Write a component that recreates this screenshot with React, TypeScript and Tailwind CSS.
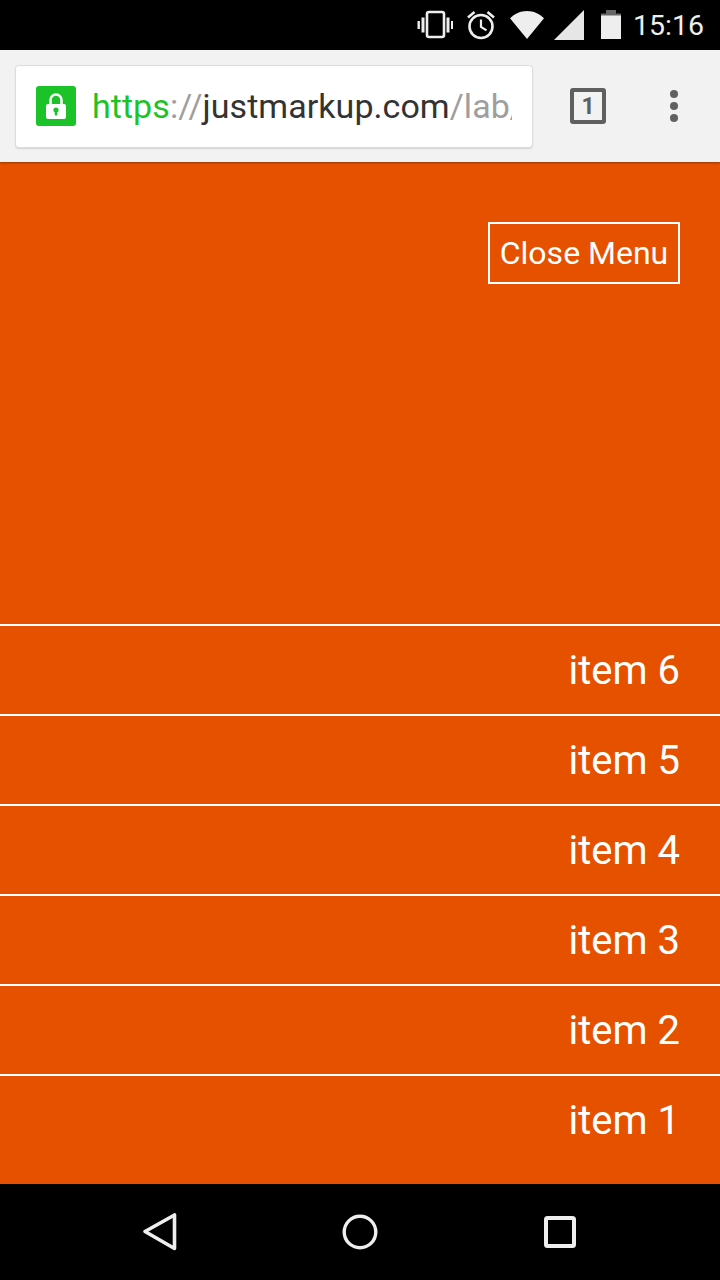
const items = [6, 5, 4, 3, 2, 1];

function StatusIcons() {
  return (
    <div className="flex items-center">
      <svg width="36" height="30" viewBox="0 0 36 30" className="ml-[417px]">
        <rect x="10" y="2" width="17" height="25" rx="2" fill="none" stroke="#eeeeee" strokeWidth="2.6" />
        <rect x="0.5" y="11" width="2.4" height="8" fill="#eeeeee" />
        <rect x="4.5" y="7.5" width="3" height="15" fill="#eeeeee" />
        <rect x="29.5" y="7.5" width="3" height="15" fill="#eeeeee" />
        <rect x="34" y="11" width="2.4" height="8" fill="#eeeeee" />
      </svg>
      <svg width="30" height="30" viewBox="0 0 30 30" className="ml-[13px]">
        <circle cx="15" cy="16.5" r="11.5" fill="none" stroke="#eeeeee" strokeWidth="2.6" />
        <path d="M15 9.5V17l5.5 3.4" fill="none" stroke="#eeeeee" strokeWidth="2.2" />
        <path d="M2 7.5 8.5 2M28 7.5 21.5 2" fill="none" stroke="#eeeeee" strokeWidth="2.6" />
      </svg>
      <svg width="34" height="30" viewBox="0 0 34 30" className="ml-[14px]">
        <path d="M0 8.2C4.500 3.800 10.500 1 17 1s12.500 2.800 17 7.200L17 29Z" fill="#eeeeee" />
      </svg>
      <svg width="30" height="30" viewBox="0 0 30 30" className="ml-[10px]">
        <path d="M30 0V30H0Z" fill="#e6e6e6" />
      </svg>
      <svg width="20" height="30" viewBox="0 0 20 30" className="ml-[17px]">
        <rect x="5" y="0" width="10" height="4" fill="#666666" />
        <path d="M0 3.500H20V29H0Z" fill="#666666" />
        <path d="M0 5.500H20V29H0Z" fill="#eeeeee" />
      </svg>
      <span className="ml-[12px] pt-[1px] text-[28.5px] leading-[50px] text-[#eeeeee] [font-family:Roboto,sans-serif]">15:16</span>
    </div>
  );
}

export default function App() {
  return (
    <div className="flex h-[1280px] w-[720px] flex-col overflow-hidden bg-[#e65100] [font-family:Roboto,sans-serif]">
      <header className="flex h-[50px] shrink-0 items-center bg-black">
        <StatusIcons />
      </header>

      <div className="flex h-[112px] shrink-0 items-center bg-[#f2f2f2] shadow-[0_1px_2px_rgba(0,0,0,0.35)]">
        <div className="ml-[16px] flex h-[81px] w-[516px] items-center rounded-[3px] bg-white pl-[20px] shadow-[0_1px_2px_rgba(0,0,0,0.4)] ring-1 ring-[#dddddd]">
          <div className="flex h-[40px] w-[40px] shrink-0 items-center justify-center rounded-[3px] bg-[#1cc328]">
            <svg width="24" height="28" viewBox="0 0 24 28">
              <path d="M6.500 13V8a5.500 5.500 0 0 1 11 0v5" fill="none" stroke="white" strokeWidth="2.600" />
              <rect x="2" y="12" width="20" height="15" rx="2" fill="white" />
              <circle cx="12" cy="18" r="2.600" fill="#1cc328" />
              <rect x="10.800" y="18" width="2.400" height="5.500" fill="#1cc328" />
            </svg>
          </div>
          <div className="ml-[16px] w-[420px] overflow-hidden whitespace-nowrap text-[34px] leading-[40px] tracking-[0.05px]">
            <span className="text-[#1cc328]">https</span>
            <span className="text-[#9e9e9e]">://</span>
            <span className="text-[#333333]">justmarkup.com</span>
            <span className="text-[#9e9e9e]">/lab/</span>
          </div>
        </div>
        <div className="ml-[38px] flex h-[36px] w-[36px] items-center justify-center rounded-[3px] border-[4px] border-[#5f5f5f] text-[23px] font-bold leading-none text-[#5f5f5f]">
          1
        </div>
        <div className="ml-[64px] flex flex-col gap-[4px]">
          <span className="h-[8px] w-[8px] rounded-full bg-[#616161]" />
          <span className="h-[8px] w-[8px] rounded-full bg-[#616161]" />
          <span className="h-[8px] w-[8px] rounded-full bg-[#616161]" />
        </div>
      </div>

      <main className="flex flex-1 flex-col">
        <div className="flex justify-end pr-[40px] pt-[60px]">
          <button className="h-[62px] w-[192px] border-2 border-white text-center text-[32px] leading-[56px] text-white">
            Close Menu
          </button>
        </div>
        <ul className="mt-auto">
          {items.map((n) => (
            <li
              key={n}
              className="flex h-[90px] items-center justify-end border-t-2 border-white pr-[40px] pt-[2px] text-[40px] text-white last:h-[110px] last:pb-[20px]"
            >
              item {n}
            </li>
          ))}
        </ul>
      </main>

      <nav className="flex h-[96px] shrink-0 items-center bg-black">
        <svg width="36" height="40" viewBox="0 0 36 40" className="ml-[142px]">
          <path d="M3 19.500 32.500 3V36.500Z" fill="none" stroke="#eeeeee" strokeWidth="3.600" strokeLinejoin="round" />
        </svg>
        <svg width="36" height="36" viewBox="0 0 36 36" className="ml-[164px]">
          <circle cx="18" cy="18" r="15.800" fill="none" stroke="#eeeeee" strokeWidth="3.400" />
        </svg>
        <svg width="34" height="34" viewBox="0 0 34 34" className="ml-[165px]">
          <rect x="3" y="3" width="28" height="28" rx="1.500" fill="none" stroke="#eeeeee" strokeWidth="4" />
        </svg>
      </nav>
    </div>
  );
}
